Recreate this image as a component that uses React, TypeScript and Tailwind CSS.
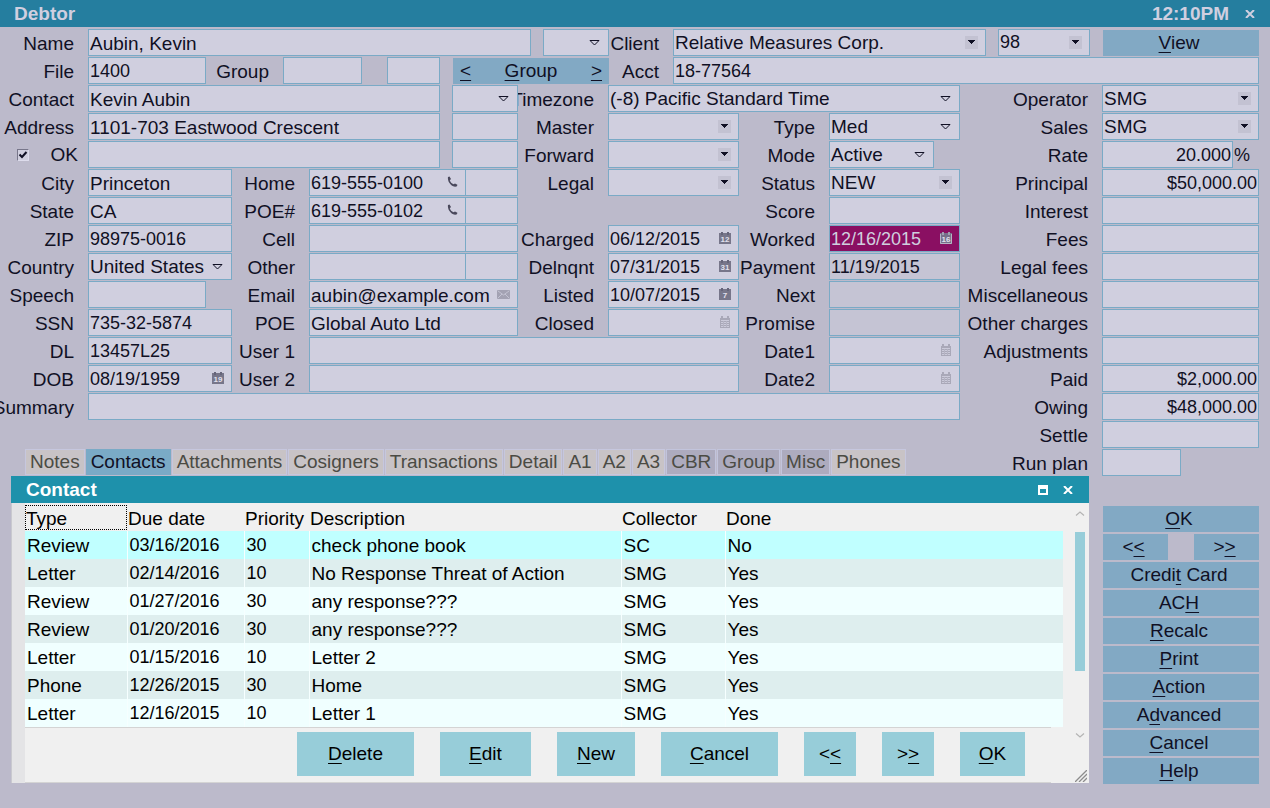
import { useId, type ReactNode } from "react";

const BOX = "min-w-0 h-[27px] -mr-px border border-[#7aaac6]";

type FieldProps = {
  label: string;
  at: string;
  value?: string;
  right?: boolean;
  locked?: boolean;
  icon?: ReactNode;
  marked?: boolean;
  id?: string;
};

// figures are set a size smaller than words
function textSize(value: string) {
  return /^[$(]?[\d.,/-]+\w?\d*$/.test(value) ? "text-[18px]" : "text-[19px]";
}

function Label({ at, htmlFor, children }: { at: string; htmlFor?: string; children: ReactNode }) {
  return (
    <label htmlFor={htmlFor} className={`${at} flex justify-end whitespace-nowrap pr-px leading-[29px]`}>
      {children}
    </label>
  );
}

function Field({ label, at, value = "", right, locked, icon, marked, id }: FieldProps) {
  const tone = marked ? "bg-[#8a0f62] text-[#d0cfdf]" : locked ? "bg-[#c5c4d4]" : "bg-[#d0cfdf]";
  return (
    <div className={`${BOX} ${at} ${tone} flex`}>
      <input
        id={id}
        aria-label={id ? undefined : label}
        defaultValue={value}
        readOnly={locked}
        className={`h-full w-full min-w-0 flex-1 bg-transparent px-px pt-0.5 outline-none ${textSize(value)} ${right ? "text-right" : ""}`}
      />
      {icon && <span className="mr-[7px] mt-1.5 shrink-0">{icon}</span>}
    </div>
  );
}

function Select({ label, at, value = "", solid, id }: FieldProps & { solid?: boolean }) {
  return (
    <div className={`${BOX} ${at} relative bg-[#d0cfdf]`}>
      <select
        id={id}
        aria-label={id ? undefined : label}
        defaultValue={value}
        className={`block h-full w-full appearance-none bg-transparent pl-px leading-[25px] outline-none ${textSize(value)}`}
      >
        <option value={value}>{value}</option>
      </select>
      <svg
        viewBox="0 0 13 13"
        className={`pointer-events-none absolute right-[7px] top-1.5 size-[13px] ${solid ? "bg-[#c3c2d2]" : ""}`}
      >
        {solid ? (
          <path d="M3 4h7v1H9v1H8v1H7v1H6V7H5V6H4V5H3z" fill="#101024" />
        ) : (
          <path d="M2 4.500h9L6.500 9z" fill="none" stroke="#101024" />
        )}
      </svg>
    </div>
  );
}

// label and control that share an id
function Row({
  labelAt,
  kind,
  ...rest
}: FieldProps & { labelAt: string; kind?: "select" | "lookup" }) {
  const id = useId();
  return (
    <>
      <Label at={labelAt} htmlFor={id}>
        {rest.label}
      </Label>
      {kind ? <Select {...rest} id={id} solid={kind === "lookup"} /> : <Field {...rest} id={id} />}
    </>
  );
}

function Calendar({ day, light }: { day?: string; light?: boolean }) {
  if (!day) {
    return (
      <svg viewBox="0 0 12 13" className="h-[13px] w-3">
        <path d="M1 2h10v10H1z" fill="#a9a8b8" />
        <path d="M2 0h2v2H2zM8 0h2v2H8z" fill="#a9a8b8" />
        <path d="M2 4.500h8M2 6.500h8M2 8.500h8M2 10.500h8" stroke="#cbcada" />
        <path d="M4.500 5v6M7.500 5v6" stroke="#b5b4c4" />
      </svg>
    );
  }
  return (
    <svg viewBox="0 0 12 13" className="h-[13px] w-3">
      <path d="M0 1h12v11H0z" fill={light ? "#77708a" : "#77768a"} />
      <path d="M2 0h2v3H2zM8 0h2v3H8z" fill={light ? "#a09fb0" : "#66657a"} />
      {light && <path d="M.5 2v9.500h11V2" fill="none" stroke="#b5b4c4" />}
      <text x="6" y="10" textAnchor="middle" fontSize="8" fontWeight="700" fill="#e2e1ee">
        {day}
      </text>
    </svg>
  );
}

function Phone() {
  return (
    <svg viewBox="0 0 12 12" className="size-3">
      <path
        d="M2 1l1.500-.5L5 3 3.800 4.300C4.300 6 5.700 7.700 7.500 8.300L9 7.400l2.400 1.400-.4 1.500C7 12.200 1 6.500 2 1z"
        fill="#4a495c"
      />
    </svg>
  );
}

function Mail() {
  return (
    <svg viewBox="0 0 13 9" className="mt-0.5 h-[9px] w-[13px]">
      <rect width="13" height="9" rx="1" fill="#a3a2b3" />
      <path d="M1 1l5.500 4L12 1M1 8l4-4M12 8L8 4" fill="none" stroke="#cccbdb" strokeWidth=".8" />
    </svg>
  );
}

// "&" stands before the access key, as in a menu resource
function Caption({ text }: { text: string }) {
  const i = text.indexOf("&");
  return (
    <>
      {text.slice(0, i)}
      <span className="underline decoration-1 underline-offset-[3px]">{text[i + 1]}</span>
      {text.slice(i + 2)}
    </>
  );
}

function SideButton({ at, text }: { at: string; text: string }) {
  return (
    <button type="button" className={`${at} ml-px mt-px -mr-px h-[26px] bg-[#82a9c4] pr-1 leading-[26px]`}>
      <Caption text={text} />
    </button>
  );
}

const tabs = [
  { name: "Notes" },
  { name: "Contacts", active: true },
  { name: "Attachments" },
  { name: "Cosigners" },
  { name: "Transactions" },
  { name: "Detail" },
  { name: "A1" },
  { name: "A2" },
  { name: "A3" },
  { name: "CBR", cool: true },
  { name: "Group", cool: true },
  { name: "Misc", cool: true },
  { name: "Phones" },
];

const contacts = [
  ["Review", "03/16/2016", "30", "check phone book", "SC", "No"],
  ["Letter", "02/14/2016", "10", "No Response Threat of Action", "SMG", "Yes"],
  ["Review", "01/27/2016", "30", "any response???", "SMG", "Yes"],
  ["Review", "01/20/2016", "30", "any response???", "SMG", "Yes"],
  ["Letter", "01/15/2016", "10", "Letter 2", "SMG", "Yes"],
  ["Phone", "12/26/2015", "30", "Home", "SMG", "Yes"],
  ["Letter", "12/16/2015", "10", "Letter 1", "SMG", "Yes"],
];

const columns = [
  { name: "Type", width: "w-[102px]" },
  { name: "Due date", width: "w-[117px]" },
  { name: "Priority", width: "w-[65px]" },
  { name: "Description", width: "w-[312px]" },
  { name: "Collector", width: "w-[104px]" },
  { name: "Done", width: "" },
];

const actions = [
  { text: "&Delete", width: "w-[117px]" },
  { text: "&Edit", width: "w-[91px]" },
  { text: "&New", width: "w-[78px]" },
  { text: "&Cancel", width: "w-[117px]" },
  { text: "<&<", width: "w-[52px]" },
  { text: ">&>", width: "w-[52px]" },
  { text: "&OK", width: "w-[65px]" },
];

function rowTone(i: number) {
  if (i === 0) return "bg-[#c0ffff]";
  return i % 2 ? "bg-[#deeeee]" : "bg-[#f0ffff]";
}

function Cross({ className }: { className: string }) {
  return (
    <svg viewBox="0 0 10 8" className={className}>
      <path d="M1 0l8 8M9 0L1 8" stroke="currentColor" strokeWidth="2" />
    </svg>
  );
}

function ContactWindow() {
  return (
    <section className="col-start-1 col-end-84 row-start-17 row-span-11 -mt-px mb-0.5 ml-px flex flex-col bg-[#f0f0f0] text-black">
      <header className="flex h-[27px] items-center bg-[#1e91ab] pl-[15px] pr-4 text-white">
        <h2 className="flex-1 pt-px font-bold">Contact</h2>
        <button type="button" aria-label="Maximize" className="mr-[15px] h-[10px] w-[10px] border-2 border-t-[4px] border-white" />
        <button type="button" aria-label="Close window">
          <Cross className="h-2 w-[10px]" />
        </button>
      </header>
      <div className="flex min-h-0 flex-1">
        <div className="w-3.5 shrink-0 border-l border-[#c9c9cf] bg-[#e4e4e6]" />
        <div className="flex min-w-0 flex-1 flex-col">
          <table className="w-full table-fixed border-collapse">
            <thead>
              <tr className="h-7">
                {columns.map((c, i) => (
                  <th key={c.name} className={`${c.width} p-0 text-left font-normal whitespace-nowrap`}>
                    <span
                      className={`block h-[25px] border border-dotted leading-[25px] ${i === 0 ? "border-black" : "border-transparent"}`}
                    >
                      {c.name}
                    </span>
                  </th>
                ))}
              </tr>
            </thead>
            <tbody>
              {contacts.map((row, i) => (
                <tr key={row[1]} className={`h-7 ${rowTone(i)}`}>
                  {row.map((cell, j) => (
                    <td
                      key={j}
                      className={`border-r border-[#f6ffff] pt-px pb-0 pl-0.5 leading-[27px] whitespace-nowrap last:border-r-0 ${textSize(cell)}`}
                    >
                      {cell}
                    </td>
                  ))}
                </tr>
              ))}
            </tbody>
          </table>
          <div className="mr-3 flex flex-1 items-start justify-end gap-[26px] border-y border-[#d4d4d4] pt-1 pr-[26px]">
            {actions.map((a) => (
              <button key={a.text} type="button" className={`${a.width} h-11 bg-[#97cdd9]`}>
                <Caption text={a.text} />
              </button>
            ))}
          </div>
        </div>
        <div className="flex w-[26px] shrink-0 flex-col items-end pt-2 pr-1">
          <svg viewBox="0 0 10 5" className="h-[5px] w-[10px] text-[#b4b4b4]">
            <path d="M1 4.500L5 1l4 3.500" fill="none" stroke="currentColor" strokeWidth="1.200" />
          </svg>
          <div className="mt-4 h-[139px] w-[10px] bg-[#97cdd9]" />
          <svg viewBox="0 0 10 5" className="mt-auto h-[5px] w-[10px] text-[#b4b4b4]">
            <path d="M1 .5L5 4 9 .5" fill="none" stroke="currentColor" strokeWidth="1.200" />
          </svg>
          <svg viewBox="0 0 12 12" className="-mr-0.5 mb-px mt-8 size-3">
            <path d="M0 12L12 0M4 12l8-8M8 12l4-4" stroke="#8c8c8c" strokeWidth="1.300" />
          </svg>
        </div>
      </div>
    </section>
  );
}

export default function App() {
  return (
    <div className="min-h-screen overflow-hidden bg-[#bcbacb] font-['Liberation_Sans',Arial,sans-serif] text-[19px] leading-7 text-[#101024]">
      <header className="flex h-[27px] items-center bg-[#257e9f] pl-3.5 pr-[15px] font-bold text-[#d0cfe0]">
        <h1 className="flex-1 pt-px">Debtor</h1>
        <time className="mr-4 pt-px">12:10PM</time>
        <button type="button" aria-label="Close">
          <Cross className="h-2 w-[10px]" />
        </button>
      </header>

      <main className="mt-0.5 grid auto-rows-[28px] grid-cols-[repeat(96,minmax(0,1fr))] pl-2.5 pr-3">
        {/* account header */}
        <Row label="Name" labelAt="col-start-1 col-end-6 row-start-1" at="col-start-7 col-end-41 row-start-1" value="Aubin, Kevin" />
        <Select label="Suffix" at="col-start-42 col-end-47 row-start-1" />
        <Row label="Client" kind="lookup" labelAt="col-start-47 col-end-51 row-start-1" at="col-start-52 col-end-76 row-start-1" value="Relative Measures Corp." />
        <Select label="Client number" solid at="col-start-77 col-end-84 row-start-1" value="98" />
        <SideButton at="col-start-85 col-end-97 row-start-1" text="&View" />

        <Row label="File" labelAt="col-start-1 col-end-6 row-start-2" at="col-start-7 col-end-16 row-start-2" value="1400" />
        <Row label="Group" labelAt="col-start-16 col-end-21 row-start-2" at="col-start-22 col-end-28 row-start-2" />
        <Field label="Group member" at="col-start-30 col-end-34 row-start-2" />
        <div className="col-start-35 col-end-47 row-start-2 ml-px mt-px -mr-px flex h-[26px] justify-between bg-[#82a9c4] px-[7px] leading-[26px]">
          <button type="button">
            <Caption text="&<" />
          </button>
          <button type="button">
            <Caption text="&Group" />
          </button>
          <button type="button">
            <Caption text="&>" />
          </button>
        </div>
        <Row label="Acct" labelAt="col-start-47 col-end-51 row-start-2" at="col-start-52 col-end-97 row-start-2" value="18-77564" />

        {/* address */}
        <Row label="Contact" labelAt="col-start-1 col-end-6 row-start-3" at="col-start-7 col-end-34 row-start-3" value="Kevin Aubin" />
        <Row label="Address" labelAt="col-start-1 col-end-6 row-start-4" at="col-start-7 col-end-34 row-start-4" value="1101-703 Eastwood Crescent" />
        <label className="col-start-1 col-end-7 row-start-5 flex items-center justify-between pl-[7px] pr-2.5">
          <span className="relative flex size-3 border border-[#77768a] border-r-[#dddcec] border-b-[#dddcec]">
            <input type="checkbox" defaultChecked className="peer size-full appearance-none bg-[#d0cfdf]" />
            <svg viewBox="0 0 10 10" className="pointer-events-none absolute inset-0 size-[10px] opacity-0 peer-checked:opacity-100">
              <path d="M1.500 4.500L4 7l4.500-5" fill="none" stroke="#101024" strokeWidth="2" />
            </svg>
          </span>
          OK
        </label>
        <Field label="Address line 2" at="col-start-7 col-end-34 row-start-5" />
        <Row label="City" labelAt="col-start-1 col-end-6 row-start-6" at="col-start-7 col-end-18 row-start-6" value="Princeton" />
        <Row label="State" labelAt="col-start-1 col-end-6 row-start-7" at="col-start-7 col-end-18 row-start-7" value="CA" />
        <Row label="ZIP" labelAt="col-start-1 col-end-6 row-start-8" at="col-start-7 col-end-18 row-start-8" value="98975-0016" />
        <Row label="Country" kind="select" labelAt="col-start-1 col-end-6 row-start-9" at="col-start-7 col-end-18 row-start-9" value="United States" />
        <Row label="Speech" labelAt="col-start-1 col-end-6 row-start-10" at="col-start-7 col-end-16 row-start-10" />
        <Row label="SSN" labelAt="col-start-1 col-end-6 row-start-11" at="col-start-7 col-end-18 row-start-11" value="735-32-5874" />
        <Row label="DL" labelAt="col-start-1 col-end-6 row-start-12" at="col-start-7 col-end-18 row-start-12" value="13457L25" />
        <Row label="DOB" labelAt="col-start-1 col-end-6 row-start-13" at="col-start-7 col-end-18 row-start-13" value="08/19/1959" icon={<Calendar day="19" />} />
        <Row label="Summary" labelAt="col-start-1 col-end-6 row-start-14" at="col-start-7 col-end-74 row-start-14" />

        {/* phones */}
        <Row label="Home" labelAt="col-start-18 col-end-23 row-start-6" at="col-start-24 col-end-36 row-start-6" value="619-555-0100" icon={<Phone />} />
        <Field label="Home extension" at="col-start-36 col-end-40 row-start-6" />
        <Row label="POE#" labelAt="col-start-18 col-end-23 row-start-7" at="col-start-24 col-end-36 row-start-7" value="619-555-0102" icon={<Phone />} />
        <Field label="POE extension" at="col-start-36 col-end-40 row-start-7" />
        <Row label="Cell" labelAt="col-start-18 col-end-23 row-start-8" at="col-start-24 col-end-36 row-start-8" />
        <Field label="Cell extension" at="col-start-36 col-end-40 row-start-8" />
        <Row label="Other" labelAt="col-start-18 col-end-23 row-start-9" at="col-start-24 col-end-36 row-start-9" />
        <Field label="Other extension" at="col-start-36 col-end-40 row-start-9" />
        <Row label="Email" labelAt="col-start-18 col-end-23 row-start-10" at="col-start-24 col-end-40 row-start-10" value="aubin@example.com" icon={<Mail />} />
        <Row label="POE" labelAt="col-start-18 col-end-23 row-start-11" at="col-start-24 col-end-40 row-start-11" value="Global Auto Ltd" />
        <Row label="User 1" labelAt="col-start-18 col-end-23 row-start-12" at="col-start-24 col-end-57 row-start-12" />
        <Row label="User 2" labelAt="col-start-18 col-end-23 row-start-13" at="col-start-24 col-end-57 row-start-13" />

        {/* file state */}
        <Row label="Timezone" kind="select" labelAt="col-start-40 col-end-46 row-start-3" at="col-start-47 col-end-74 row-start-3" value="(-8) Pacific Standard Time" />
        <Select label="Contact kind" at="col-start-35 col-end-40 row-start-3" />
        <Field label="Address code 1" at="col-start-35 col-end-40 row-start-4" />
        <Field label="Address code 2" at="col-start-35 col-end-40 row-start-5" />
        <Row label="Master" kind="lookup" labelAt="col-start-40 col-end-46 row-start-4" at="col-start-47 col-end-57 row-start-4" />
        <Row label="Forward" kind="lookup" labelAt="col-start-40 col-end-46 row-start-5" at="col-start-47 col-end-57 row-start-5" />
        <Row label="Legal" kind="lookup" labelAt="col-start-40 col-end-46 row-start-6" at="col-start-47 col-end-57 row-start-6" />
        <Row label="Charged" labelAt="col-start-40 col-end-46 row-start-8" at="col-start-47 col-end-57 row-start-8" value="06/12/2015" icon={<Calendar day="12" />} />
        <Row label="Delnqnt" labelAt="col-start-40 col-end-46 row-start-9" at="col-start-47 col-end-57 row-start-9" value="07/31/2015" icon={<Calendar day="31" />} />
        <Row label="Listed" labelAt="col-start-40 col-end-46 row-start-10" at="col-start-47 col-end-57 row-start-10" value="10/07/2015" icon={<Calendar day="7" />} />
        <Row label="Closed" labelAt="col-start-40 col-end-46 row-start-11" at="col-start-47 col-end-57 row-start-11" icon={<Calendar />} />

        <Row label="Type" kind="select" labelAt="col-start-57 col-end-63 row-start-4" at="col-start-64 col-end-74 row-start-4" value="Med" />
        <Row label="Mode" kind="select" labelAt="col-start-57 col-end-63 row-start-5" at="col-start-64 col-end-72 row-start-5" value="Active" />
        <Row label="Status" kind="lookup" labelAt="col-start-57 col-end-63 row-start-6" at="col-start-64 col-end-74 row-start-6" value="NEW" />
        <Row label="Score" labelAt="col-start-57 col-end-63 row-start-7" at="col-start-64 col-end-74 row-start-7" />
        <Row label="Worked" marked labelAt="col-start-57 col-end-63 row-start-8" at="col-start-64 col-end-74 row-start-8" value="12/16/2015" icon={<Calendar day="16" light />} />
        <Row label="Payment" locked labelAt="col-start-57 col-end-63 row-start-9" at="col-start-64 col-end-74 row-start-9" value="11/19/2015" />
        <Row label="Next" locked labelAt="col-start-57 col-end-63 row-start-10" at="col-start-64 col-end-74 row-start-10" />
        <Row label="Promise" locked labelAt="col-start-57 col-end-63 row-start-11" at="col-start-64 col-end-74 row-start-11" />
        <Row label="Date1" labelAt="col-start-57 col-end-63 row-start-12" at="col-start-64 col-end-74 row-start-12" icon={<Calendar />} />
        <Row label="Date2" labelAt="col-start-57 col-end-63 row-start-13" at="col-start-64 col-end-74 row-start-13" icon={<Calendar />} />

        {/* amounts */}
        <Row label="Operator" kind="lookup" labelAt="col-start-74 col-end-84 row-start-3" at="col-start-85 col-end-97 row-start-3" value="SMG" />
        <Row label="Sales" kind="lookup" labelAt="col-start-74 col-end-84 row-start-4" at="col-start-85 col-end-97 row-start-4" value="SMG" />
        <Row label="Rate" right labelAt="col-start-74 col-end-84 row-start-5" at="col-start-85 col-end-95 row-start-5" value="20.000" />
        <span className="col-start-95 col-end-97 row-start-5 pl-0.5 text-[18px]">%</span>
        <Row label="Principal" right labelAt="col-start-74 col-end-84 row-start-6" at="col-start-85 col-end-97 row-start-6" value="$50,000.00" />
        <Row label="Interest" right labelAt="col-start-74 col-end-84 row-start-7" at="col-start-85 col-end-97 row-start-7" />
        <Row label="Fees" right labelAt="col-start-74 col-end-84 row-start-8" at="col-start-85 col-end-97 row-start-8" />
        <Row label="Legal fees" right labelAt="col-start-74 col-end-84 row-start-9" at="col-start-85 col-end-97 row-start-9" />
        <Row label="Miscellaneous" right labelAt="col-start-74 col-end-84 row-start-10" at="col-start-85 col-end-97 row-start-10" />
        <Row label="Other charges" right labelAt="col-start-74 col-end-84 row-start-11" at="col-start-85 col-end-97 row-start-11" />
        <Row label="Adjustments" right labelAt="col-start-74 col-end-84 row-start-12" at="col-start-85 col-end-97 row-start-12" />
        <Row label="Paid" right labelAt="col-start-74 col-end-84 row-start-13" at="col-start-85 col-end-97 row-start-13" value="$2,000.00" />
        <Row label="Owing" right labelAt="col-start-74 col-end-84 row-start-14" at="col-start-85 col-end-97 row-start-14" value="$48,000.00" />
        <Row label="Settle" right labelAt="col-start-74 col-end-84 row-start-15" at="col-start-85 col-end-97 row-start-15" />
        <Row label="Run plan" labelAt="col-start-74 col-end-84 row-start-16" at="col-start-85 col-end-91 row-start-16" />

        <nav className="col-start-2 col-end-74 row-start-16 ml-0.5 flex h-[26px] gap-px whitespace-nowrap">
          {tabs.map((t) => (
            <button
              key={t.name}
              type="button"
              className={`border px-1 leading-6 ${
                t.active
                  ? "border-[#7aaac6] bg-[#7aaac6]"
                  : t.cool
                    ? "border-[#c2c4dc] bg-[#adabbe] text-[#4b4b44]"
                    : "border-[#c6c7de] bg-[#c8c3c6] text-[#4b4b44]"
              }`}
            >
              {t.name}
            </button>
          ))}
        </nav>

        <ContactWindow />

        <SideButton at="col-start-85 col-end-97 row-start-18" text="&OK" />
        <SideButton at="col-start-85 col-end-90 row-start-19" text="<&<" />
        <SideButton at="col-start-92 col-end-97 row-start-19" text=">&>" />
        <SideButton at="col-start-85 col-end-97 row-start-20" text="Credi&t Card" />
        <SideButton at="col-start-85 col-end-97 row-start-21" text="AC&H" />
        <SideButton at="col-start-85 col-end-97 row-start-22" text="&Recalc" />
        <SideButton at="col-start-85 col-end-97 row-start-23" text="&Print" />
        <SideButton at="col-start-85 col-end-97 row-start-24" text="&Action" />
        <SideButton at="col-start-85 col-end-97 row-start-25" text="A&dvanced" />
        <SideButton at="col-start-85 col-end-97 row-start-26" text="&Cancel" />
        <SideButton at="col-start-85 col-end-97 row-start-27" text="&Help" />
      </main>
    </div>
  );
}
